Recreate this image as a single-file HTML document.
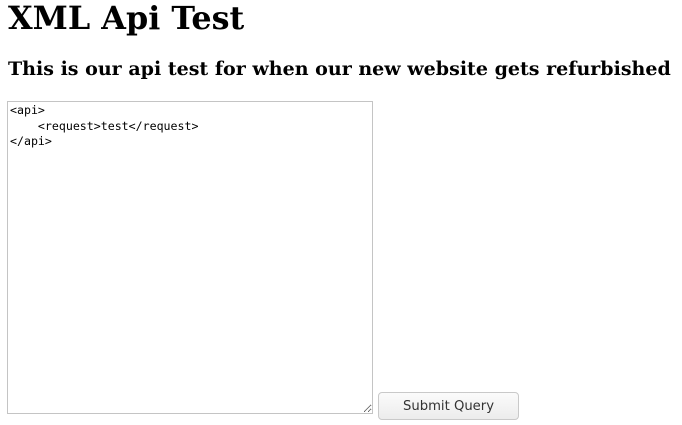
<!DOCTYPE html>
<html><head><style>
html,body{margin:0;padding:0;background:#fff;width:682px;height:425px;overflow:hidden;position:relative}
.h1{position:absolute;left:8px;top:0px;font:bold 31.8px/37px "DejaVu Serif",serif;margin:0;color:#000;white-space:nowrap}
.h3{position:absolute;left:8px;top:58px;font:bold 19.05px/22px "DejaVu Serif",serif;margin:0;color:#000;white-space:nowrap}
textarea{position:absolute;left:7px;top:101px;width:366px;height:313px;box-sizing:border-box;border:1px solid #c4c4c4;margin:0;padding:1px 2px;font:11.6px/15.5px "DejaVu Sans Mono",monospace;color:#000;resize:both;background:#fff}
button{position:absolute;left:378px;top:392px;width:141px;height:28px;border:1px solid #c9c9c9;border-radius:4px;background:linear-gradient(#fbfbfb,#ececec);font:13.2px/26px "DejaVu Sans",sans-serif;color:#333;padding:1px 0 0}
</style></head><body>
<div class="h1">XML Api Test</div>
<div class="h3">This is our api test for when our new website gets refurbished</div>
<textarea>&lt;api&gt;
    &lt;request&gt;test&lt;/request&gt;
&lt;/api&gt;</textarea>
<button>Submit Query</button>
</body></html>
